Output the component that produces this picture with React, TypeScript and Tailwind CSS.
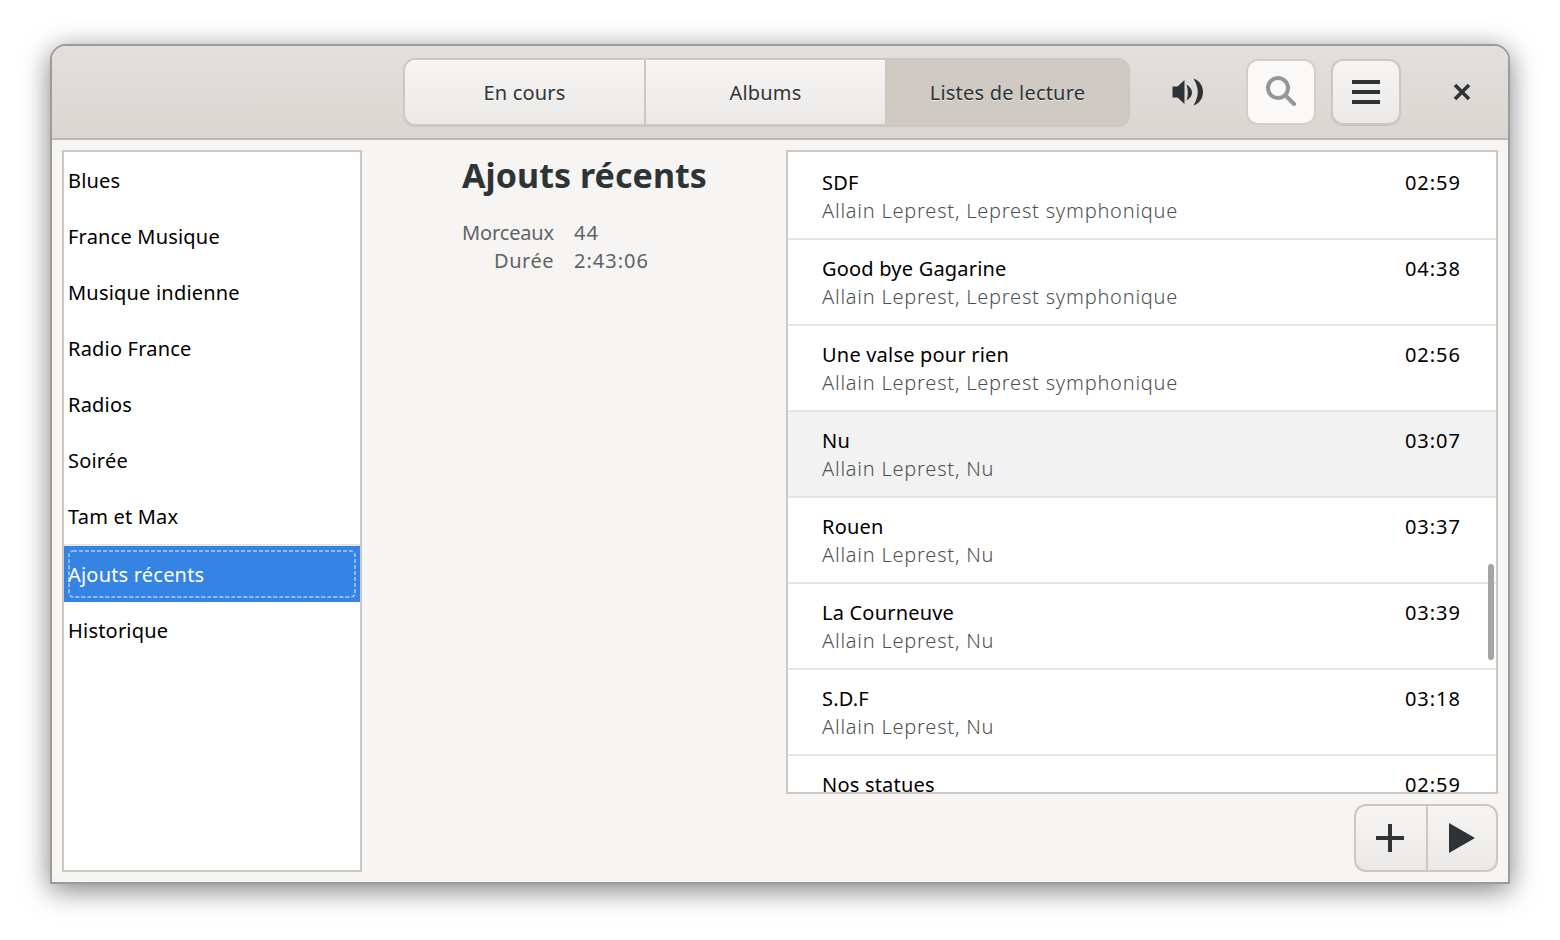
const playlists = ['Blues', 'France Musique', 'Musique indienne', 'Radio France', 'Radios', 'Soirée', 'Tam et Max'];

const tracks = [
  { title: 'SDF', artist: 'Allain Leprest, Leprest symphonique', time: '02:59' },
  { title: 'Good bye Gagarine', artist: 'Allain Leprest, Leprest symphonique', time: '04:38' },
  { title: 'Une valse pour rien', artist: 'Allain Leprest, Leprest symphonique', time: '02:56' },
  { title: 'Nu', artist: 'Allain Leprest, Nu', time: '03:07', hover: true },
  { title: 'Rouen', artist: 'Allain Leprest, Nu', time: '03:37' },
  { title: 'La Courneuve', artist: 'Allain Leprest, Nu', time: '03:39' },
  { title: 'S.D.F', artist: 'Allain Leprest, Nu', time: '03:18' },
  { title: 'Nos statues', artist: 'Allain Leprest, Nu', time: '02:59' },
];

const tabs = [
  { label: 'En cours', cls: 'w-[241px] border-r-2 border-[#cdc7c2] bg-gradient-to-b from-[#f6f5f4] to-[#ebe9e7] shadow-[inset_0_1px_0_#ffffff]' },
  { label: 'Albums', cls: 'w-[241px] border-r-2 border-[#cdc7c2] bg-gradient-to-b from-[#f6f5f4] to-[#ebe9e7] shadow-[inset_0_1px_0_#ffffff]' },
  { label: 'Listes de lecture', cls: 'flex-1 bg-[#cfcac4]' },
];

export default function App() {
  return (
    <div className="w-[1560px] h-[940px] bg-white pl-[50px] pt-[44px] overflow-hidden text-[20px] tracking-[0.2px] font-['Noto_Sans',sans-serif]">
      <div className="w-[1460px] h-[840px] flex flex-col rounded-t-[16px] border-2 border-[#9b9b99] bg-[#f6f5f4] shadow-[0_6px_28px_rgba(0,0,0,0.5)] overflow-hidden">
        {/* Header bar */}
        <div className="h-[94px] shrink-0 flex items-center pl-[351px] border-b-2 border-[#bfb8b1] bg-gradient-to-b from-[#e2dfdc] to-[#dad6d2]">
          <div className="flex h-[68px] w-[727px] rounded-[12px] border-2 border-[#cdc7c2] overflow-hidden shadow-[0_1px_1px_rgba(0,0,0,0.08)]">
            {tabs.map((tab) => (
              <div
                key={tab.label}
                className={`flex items-center justify-center pt-[2px] text-[#2e3436] [text-shadow:0_1px_0_rgba(255,255,255,0.6)] ${tab.cls}`}
              >
                {tab.label}
              </div>
            ))}
          </div>
          <div className="ml-[41px] w-[32px] flex justify-center">
            <svg width="31" height="28" viewBox="0 0 31 28">
              <path d="M0.5 8.5h5l7-6.5v24l-7-6.5h-5z" fill="#2e3436" />
              <path d="M14.5 6.5C18 9 20 11 20 14.5C20 18 18 20 14.5 22.5C15.5 19 15.8 17 15.8 14.5C15.8 12 15.5 10 14.5 6.5z" fill="#2e3436" />
              <path d="M21.5 0.5C28 3 31 8 31 14C31 20 28 25 21.5 27.5C24.5 22 25.8 18 25.8 14C25.8 10 24.5 6 21.5 0.5z" fill="#2e3436" />
            </svg>
          </div>
          <div className="ml-[43px] w-[70px] h-[66px] rounded-[12px] border-2 border-[#d3cec9] bg-[#faf9f8] flex items-center justify-center">
            <svg className="mb-[2px] mr-[1px]" width="30" height="30" viewBox="0 0 30 30" fill="none">
              <circle cx="12" cy="12" r="10" stroke="#949798" strokeWidth="4" />
              <path d="M20 20l8 8" stroke="#949798" strokeWidth="4" strokeLinecap="round" />
            </svg>
          </div>
          <div className="ml-[15px] w-[70px] h-[66px] rounded-[12px] border-2 border-[#cdc7c2] bg-gradient-to-b from-[#f6f5f4] to-[#ebe9e7] shadow-[0_1px_1px_rgba(0,0,0,0.1)] flex flex-col items-center justify-center gap-[6px]">
            <div className="w-[28px] h-[4px] bg-[#2e3436]" />
            <div className="w-[28px] h-[4px] bg-[#2e3436]" />
            <div className="w-[28px] h-[4px] bg-[#2e3436]" />
          </div>
          <div className="ml-[51px] w-[20px] flex justify-center">
            <svg width="18" height="18" viewBox="0 0 18 18" fill="none">
              <path d="M2 2l14 14M16 2L2 16" stroke="#2e3436" strokeWidth="3.6" />
            </svg>
          </div>
        </div>

        {/* Body */}
        <div className="flex-1 flex p-[10px] min-h-0">
          <div className="w-[300px] border-2 border-[#cdc7c2] bg-white shrink-0">
            {playlists.map((name) => (
              <div key={name} className="h-[56px] flex items-center pl-[4px] pt-[2px] text-black">
                {name}
              </div>
            ))}
            <div className="h-[2px] bg-[#e8e6e4]" />
            <div className="relative h-[56px] flex items-center pl-[4px] pt-[2px] text-white bg-[#3584e4]">
              Ajouts récents
              <svg className="absolute left-[4px] top-[4px]" width="288" height="48" viewBox="0 0 288 48" fill="none">
                <rect x="1" y="1" width="286" height="46" rx="4" stroke="#ffffff" strokeOpacity="0.45" strokeWidth="2" strokeDasharray="4 2" />
              </svg>
            </div>
            <div className="h-[56px] flex items-center pl-[4px] pt-[2px] text-black">Historique</div>
          </div>

          <div className="flex-1 min-w-0 flex flex-col">
            <div className="flex-1 min-h-0 flex">
              <div className="w-[424px] shrink-0 pl-[100px]">
                <div className="text-[34px] leading-[50px] tracking-[0.05px] font-bold text-[#2e3436]">Ajouts récents</div>
                <div className="mt-[19px] grid grid-cols-[92px_1fr] gap-x-[20px] leading-[28px] text-[#5f6365]">
                  <div className="text-right tracking-[-0.15px]">Morceaux</div>
                  <div className="tracking-[1px]">44</div>
                  <div className="text-right tracking-[0.5px]">Durée</div>
                  <div className="tracking-[1px]">2:43:06</div>
                </div>
              </div>
              <div className="relative w-[712px] shrink-0 border-2 border-[#cdc7c2] bg-white pt-[2px] overflow-hidden">
                {tracks.map((t) => (
                  <div key={t.title}>
                    <div className={`h-[84px] pl-[34px] pr-[35px] pt-[15px] flex justify-between ${t.hover ? 'bg-[#f2f2f2]' : ''}`}>
                      <div>
                        <div className="leading-[28px] text-black">{t.title}</div>
                        <div className="leading-[28px] font-light tracking-[0.78px] text-[#4d5153]">{t.artist}</div>
                      </div>
                      <div className="leading-[28px] tracking-[1px] text-black">{t.time}</div>
                    </div>
                    <div className="h-[2px] bg-[#e8e6e4]" />
                  </div>
                ))}
                <div className="absolute right-[2px] top-[412px] w-[6px] h-[96px] rounded-full bg-[#a5a5a5]" />
              </div>
            </div>
            <div className="h-[68px] mt-[10px] shrink-0 flex justify-end">
              <div className="flex h-[68px] w-[144px] rounded-[12px] border-2 border-[#cdc7c2] bg-gradient-to-b from-[#f6f5f4] to-[#ebe9e7] overflow-hidden">
                <div className="w-[72px] pr-[2px] flex items-center justify-center border-r-2 border-[#cdc7c2]">
                  <svg width="28" height="28" viewBox="0 0 28 28"><path d="M12 0h4v12h12v4H16v12h-4V16H0v-4h12z" fill="#2e3436" /></svg>
                </div>
                <div className="flex-1 flex items-center justify-center">
                  <svg width="26" height="30" viewBox="0 0 26 30"><path d="M0 0l26 15L0 30z" fill="#2e3436" /></svg>
                </div>
              </div>
            </div>
          </div>
        </div>
      </div>
    </div>
  );
}
